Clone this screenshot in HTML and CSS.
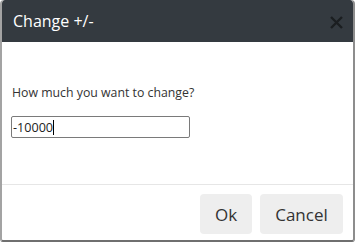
FILE: index.html
```html
<!DOCTYPE html>
<html>
<head>
<meta charset="utf-8">
<link rel="stylesheet" href="styles.css">
</head>
<body>
<div class="dialog">
  <div class="header">
    <span class="title">Change +/-</span>
    <svg class="close" width="13" height="13" viewBox="0 0 13 13"><path d="M1 1 L12 12 M12 1 L1 12" stroke="#1b1e21" stroke-width="2.4" fill="none"/></svg>
  </div>
  <div class="body">
    <div class="label">How much you want to change?</div>
    <div class="input"><span>-10000</span><span class="caret"></span></div>
  </div>
  <div class="footer">
    <button class="btn btn-ok">Ok</button>
    <button class="btn btn-cancel">Cancel</button>
  </div>
</div>
</body>
</html>
```
FILE: styles.css
```css
html, body {
  margin: 0;
  padding: 0;
  background: #fff;
}
body {
  font-family: "Open Sans", "Noto Sans", sans-serif;
  color: #333;
}
.dialog {
  width: 351px;
  height: 240px;
  border-left: 2px solid #a3a3a3;
  border-right: 2px solid #8d8d8d;
  border-bottom: 2px solid #6f6f6f;
  border-radius: 4px 4px 3px 3px;
  display: flex;
  flex-direction: column;
  overflow: hidden;
}
.header {
  height: 42px;
  background: #343a40;
  display: flex;
  align-items: center;
  justify-content: space-between;
  padding: 0 10px 0 11px;
  border-radius: 3px 3px 0 0;
  flex: none;
}
.title {
  color: #fff;
  font-size: 16px;
}
.close {
  display: block;
  margin-top: 2px;
}
.body {
  flex: 1;
  padding: 0 10px;
  border-bottom: 1px solid #e6e6e6;
}
.label {
  font-size: 12.3px;
  line-height: 18px;
  margin-top: 42px;
  color: #333;
}
.input {
  width: 176px;
  height: 20px;
  margin-top: 14px;
  margin-left: -1px;
  border: 1px solid #7a7a7a;
  border-radius: 2px;
  box-sizing: content-box;
  display: flex;
  align-items: center;
  padding-left: 1px;
  font-size: 12.6px;
  color: #222;
}
.caret {
  display: inline-block;
  width: 1px;
  height: 15px;
  background: #000;
}
.footer {
  flex: none;
  height: 55px;
  display: flex;
  justify-content: flex-end;
  align-items: flex-start;
  gap: 8px;
  padding: 9px 10px 0 0;
  box-sizing: border-box;
}
.btn {
  height: 40px;
  border: none;
  background: #eeeeee;
  border-radius: 4px;
  font-family: "Open Sans", "Noto Sans", sans-serif;
  font-size: 17px;
  color: #333;
  padding: 0;
}
.btn-ok { width: 52px; }
.btn-cancel { width: 83px; }
```
